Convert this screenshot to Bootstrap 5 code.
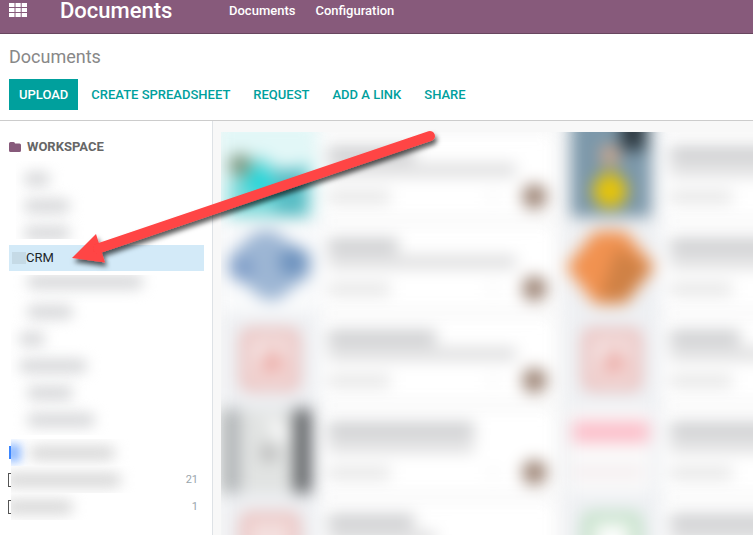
<!DOCTYPE html>
<html lang="en">
<head>
<meta charset="utf-8">
<meta name="viewport" content="width=device-width, initial-scale=1">
<title>Documents</title>
<link href="https://cdn.jsdelivr.net/npm/bootstrap@5.3.0/dist/css/bootstrap.min.css" rel="stylesheet">
<style>
body { font-family: Roboto, sans-serif; font-size: 13px; line-height: 20px; color: #212529; }
.topbar { background: #875a7b; border-bottom: 1px solid #68465f; height: 34px; padding: 0 9px; }
.topbar a { color: #fff; text-decoration: none; font-weight: 500; }
.topbar .menu-links { gap: 20px; padding-top: 1px; }
.apps-btn { background: none; border: 0; padding: 0; line-height: 0; width: 51px; text-align: left; }
.topbar .brand-link { font-size: 22px; line-height: 22px; width: 169px; }
.control-panel { padding: 11px 9px 10px; border-bottom: 1px solid #ccc; }
.crumb { font-size: 18px; line-height: 24px; color: #888; margin: 0 0 10px; font-weight: 400; }
.actions { gap: 3px; }
.btn-flat { font-size: 13px; line-height: 19px; font-weight: 500; border-radius: 0; padding: 5px 9px; text-transform: uppercase; color: #00a09d; }
.btn-flat:hover { color: #00807d; }
.btn-flat.btn-main { background: #00a09d; color: #fff; }
.side { width: 213px; border-right: 1px solid #dee2e6; padding: 16px 8px 0 9px; }
.side-title { font-size: 13px; line-height: 20px; font-weight: 700; color: #666; margin: 0; }
.side-row { height: 27px; }
.names { margin: 4px 0 0 2px; height: 160px; overflow: hidden; }
.names .side-row:first-child { height: 23px; }
.names-top { margin: 4px 0 0 7px; height: 78px; overflow: hidden; }
.picked { background: #d3eaf8; color: #212529; text-decoration: none; height: 26px; margin: 6px 0 0; padding-left: 3px; line-height: 26px; }
.picked-chip { width: 14px; height: 12px; background: #c5dae6; }
.smudge { height: 14px; border-radius: 6px; background: #d6d7d9; filter: blur(7px); flex: none; }
.w-a { width: 26px; } .w-b { width: 46px; } .w-c { width: 68px; } .w-d { width: 86px; } .w-e { width: 116px; }
.tick-edge { width: 3px; height: 14px; overflow: hidden; margin-left: -1px; flex: none; }
.tick-edge input { appearance: none; width: 14px; height: 14px; margin: 0; border: 1px solid #555; background: #fff; display: block; }
.blue-edge { width: 2px; height: 13px; background: #3b86ff; flex: none; }
.blue-haze { width: 16px; height: 18px; margin-left: -6px; background: #8fbaff; filter: blur(5px); flex: none; }
.tag-name { height: 27px; overflow: hidden; }
.tag-name .smudge { height: 14px; background: #d6d6d6; margin-left: -6px; }
.tally { color: #9aa5ac; font-size: 11px; padding-right: 6px; }
.stage { background: #f8f8f8; padding: 11px 0 0 8px; min-width: 0; }
.file-grid { display: grid; grid-template-columns: 334px 334px; gap: 8px; padding-top: 1px; filter: blur(8px); }
.file-card { height: 84px; background: #fff; border: 1px solid #f1f1f2; }
.file-thumb { width: 97px; background: #eef0f3; margin: -5px 0; padding: 4px 0 0 7px; flex: none; }
.file-thumb svg { overflow: visible; display: block; }
.file-info { padding: 13px 3px 0 9px; min-width: 0; }
.ink { height: 13px; background: #c6c7c9; flex: none; }
.ink-soft { background: #dadadb; height: 12px; }
.ink-date { width: 62px; height: 10px; background: #dedede; }
.ink-dot { width: 10px; height: 6px; background: #eee; }
.face { width: 25px; height: 25px; border-radius: 50%; background: #9c8374; }
.i1 { width: 70px; } .i2 { width: 86px; } .i3 { width: 108px; } .i4 { width: 146px; } .i5 { width: 188px; }
.pointer { position: absolute; left: 60px; top: 120px; pointer-events: none; }
</style>
<script src="https://cdn.jsdelivr.net/npm/bootstrap@5.3.0/dist/js/bootstrap.bundle.min.js"></script>
</head>
<body class="bg-white">
<div class="d-flex flex-column vh-100 overflow-hidden position-relative">
  <nav class="topbar d-flex align-items-start flex-shrink-0">
    <button class="apps-btn" type="button" aria-label="Applications">
      <svg width="18" height="17" fill="#fff" aria-hidden="true"><path d="M0 3h5.500v4H0zM6.500 3h5.200v4h-5.200zM12.700 3H18v4h-5.300zM0 8h5.500v4H0zM6.500 8h5.200v4h-5.200zM12.700 8H18v4h-5.300zM0 13h5.500v4H0zM6.500 13h5.200v4h-5.200zM12.700 13H18v4h-5.300z"/></svg>
    </button>
    <a class="brand-link" href="#">Documents</a>
    <div class="menu-links d-flex"><a href="#">Documents</a><a href="#">Configuration</a></div>
  </nav>
  <header class="control-panel flex-shrink-0">
    <h1 class="crumb">Documents</h1>
    <div class="actions d-flex flex-wrap">
      <button class="btn btn-flat btn-main" type="button">Upload</button>
      <button class="btn btn-flat" type="button">Create Spreadsheet</button>
      <button class="btn btn-flat" type="button">Request</button>
      <button class="btn btn-flat" type="button">Add a Link</button>
      <button class="btn btn-flat" type="button">Share</button>
    </div>
  </header>
  <div class="d-flex flex-grow-1 overflow-hidden">
    <aside class="side flex-shrink-0">
      <div class="d-flex align-items-center">
        <svg width="18" height="12" aria-hidden="true"><path fill="#875a7b" d="M1.500 1h3Q6 1 6 2.500h4.500Q12 2.500 12 4v5.500Q12 11 10.500 11h-9Q0 11 0 9.500v-7Q0 1 1.500 1z"/></svg>
        <h2 class="side-title">WORKSPACE</h2>
      </div>
      <div class="names-top">
        <div class="side-row d-flex align-items-center ps-2 pt-2"><div class="smudge w-a"></div></div>
        <div class="side-row d-flex align-items-center ps-2 pt-2"><div class="smudge w-b"></div></div>
        <div class="side-row d-flex align-items-center ps-2 pt-2"><div class="smudge w-b"></div></div>
      </div>
      <a class="picked d-flex align-items-center" href="#"><span class="picked-chip"></span>CRM</a>
      <div class="names">
        <div class="side-row d-flex align-items-start ps-3"><div class="smudge w-e"></div></div>
        <div class="side-row d-flex align-items-center ps-3"><div class="smudge w-b"></div></div>
        <div class="side-row d-flex align-items-center ps-2"><div class="smudge w-a"></div></div>
        <div class="side-row d-flex align-items-center ps-2"><div class="smudge w-c"></div></div>
        <div class="side-row d-flex align-items-center ps-3"><div class="smudge w-b"></div></div>
        <div class="side-row d-flex align-items-center ps-3"><div class="smudge w-c"></div></div>
      </div>
      <div class="d-flex align-items-center pt-1">
        <span class="blue-edge"></span>
        <div class="tag-name d-flex align-items-center flex-grow-1"><span class="blue-haze"></span><span class="smudge w-d ms-2"></span></div>
      </div>
      <div class="d-flex align-items-center">
        <span class="tick-edge"><input type="checkbox" aria-label="First tag"></span>
        <div class="tag-name d-flex align-items-center flex-grow-1"><span class="smudge w-e"></span></div>
        <span class="tally">21</span>
      </div>
      <div class="d-flex align-items-center">
        <span class="tick-edge"><input type="checkbox" aria-label="Second tag"></span>
        <div class="tag-name d-flex align-items-center flex-grow-1"><span class="smudge w-c"></span></div>
        <span class="tally">1</span>
      </div>
    </aside>
    <main class="stage flex-grow-1 d-flex">
      <div class="overflow-hidden flex-grow-1">
        <div class="file-grid">
          <div class="file-card d-flex">
            <div class="file-thumb"><svg width="80" height="84"><path fill="#e2f7f7" d="M-12-12h100v96h-100z"/><path fill="#7fdada" d="M0 84V48L30 22 55 40 80 30v54z"/><path fill="#20d6da" d="M14 60l14-30 26 32z"/><path fill="#58bcc4" d="M46 36h32v46H46z"/><circle cx="11" cy="32" r="11" fill="#78937a"/></svg></div>
            <div class="file-info flex-grow-1"><div class="ink i2 mb-1"></div><div class="ink ink-soft i5 mb-2"></div><div class="d-flex align-items-center"><div class="ink-date"></div><div class="ink-dot ms-auto me-4"></div><div class="face me-1"></div></div></div>
          </div>
          <div class="file-card d-flex">
            <div class="file-thumb"><svg width="80" height="84"><path fill="#7c98aa" d="M0-24h80v108H0z"/><path fill="#2b363d" d="M50-24h24v41H50z"/><circle cx="39" cy="22" r="10" fill="#d0a78c"/><path fill="#9aa16f" d="M32 34h14v20H32z"/><circle cx="39" cy="58" r="17" fill="#e6c408"/></svg></div>
            <div class="file-info flex-grow-1"><div class="ink i5 mb-1"></div><div class="ink ink-soft i5 mb-2"></div><div class="d-flex align-items-center pt-2"><div class="ink-date"></div></div></div>
          </div>
          <div class="file-card d-flex">
            <div class="file-thumb"><svg width="80" height="84"><path fill="#fafbfc" d="M-7-3h94v92H-7z"/><path fill="#9db6d4" d="M20 12Q40-4 58 16l24 12v22L62 64Q42 88 20 62L0 50V32z"/><circle cx="64" cy="37" r="14" fill="#6d92be"/><circle cx="13" cy="43" r="12" fill="#819fc9"/></svg></div>
            <div class="file-info flex-grow-1"><div class="ink i1 mb-1"></div><div class="ink ink-soft i5 mb-2"></div><div class="d-flex align-items-center"><div class="ink-date"></div><div class="ink-dot ms-auto me-4"></div><div class="face me-1"></div></div></div>
          </div>
          <div class="file-card d-flex">
            <div class="file-thumb"><svg width="80" height="84"><path fill="#f19250" d="M24 6h30l30 36-30 37H24L-5 42z"/><path fill="#cf8145" d="M46 22l34 20-23 34H28z"/></svg></div>
            <div class="file-info flex-grow-1"><div class="ink i5 mb-1"></div><div class="ink ink-soft i5 mb-2"></div><div class="d-flex align-items-center pt-2"><div class="ink-date"></div></div></div>
          </div>
          <div class="file-card d-flex">
            <div class="file-thumb"><svg width="80" height="84"><rect x="15" y="15" width="52" height="55" rx="5" fill="#f3dfde" stroke="#e8afab" stroke-width="6"/><path d="M27 57l17-28 14 25z" fill="#edada8"/></svg></div>
            <div class="file-info flex-grow-1"><div class="ink i3 mb-1"></div><div class="ink ink-soft i5 mb-2"></div><div class="d-flex align-items-center"><div class="ink-date"></div><div class="ink-dot ms-auto me-4"></div><div class="face me-1"></div></div></div>
          </div>
          <div class="file-card d-flex">
            <div class="file-thumb"><svg width="80" height="84"><rect x="15" y="15" width="52" height="55" rx="5" fill="#f3dfde" stroke="#e8afab" stroke-width="6"/><path d="M27 57l17-28 14 25z" fill="#edada8"/></svg></div>
            <div class="file-info flex-grow-1"><div class="ink i1 mb-1"></div><div class="ink ink-soft i5 mb-2"></div><div class="d-flex align-items-center pt-2"><div class="ink-date"></div></div></div>
          </div>
          <div class="file-card d-flex">
            <div class="file-thumb"><svg width="80" height="84"><path fill="#e1e3e2" d="M-17 0h97v84h-97z"/><path fill="#a9adb0" d="M-4 0h14v84H-4z"/><path fill="#5c5f62" d="M65 0h17v84H65z"/><circle cx="40" cy="44" r="8" fill="#b0b0b0"/><path d="M36 4l26 20-12 12z" fill="#fff"/></svg></div>
            <div class="file-info flex-grow-1"><div class="ink i4 mb-1"></div><div class="ink ink-soft i4 mb-2"></div><div class="d-flex align-items-center"><div class="ink-date"></div><div class="ink-dot ms-auto me-4"></div><div class="face me-1"></div></div></div>
          </div>
          <div class="file-card d-flex">
            <div class="file-thumb"><svg width="80" height="84"><path fill="#fafafa" d="M0 0h80v84H0z"/><path fill="#fcbfca" d="M2 12h76v22H2z"/><path fill="#f0e2e5" d="M2 60h70v6H2z"/></svg></div>
            <div class="file-info flex-grow-1"><div class="ink i3 mb-1"></div><div class="ink ink-soft i5 mb-2"></div><div class="d-flex align-items-center pt-2"><div class="ink-date"></div></div></div>
          </div>
          <div class="file-card d-flex">
            <div class="file-thumb"><svg width="80" height="84"><rect x="15" y="15" width="52" height="55" rx="5" fill="#f3dfde" stroke="#e8afab" stroke-width="6"/></svg></div>
            <div class="file-info flex-grow-1"><div class="ink i2 mb-1"></div><div class="ink ink-soft i3"></div></div>
          </div>
          <div class="file-card d-flex">
            <div class="file-thumb"><svg width="80" height="84"><rect x="15" y="15" width="52" height="55" rx="5" fill="#e7f1e8" stroke="#abd8b2" stroke-width="6"/><path fill="#fff" d="M30 26h22v30H30z"/></svg></div>
            <div class="file-info flex-grow-1"><div class="ink i5 mb-1"></div><div class="ink ink-soft i3"></div></div>
          </div>
        </div>
      </div>
    </main>
  </div>
  <svg class="pointer" width="390" height="160" aria-hidden="true">
    <defs><filter id="drop" x="-5%" y="-10%" width="110%" height="125%"><feDropShadow dx="2" dy="4" stdDeviation="2.500" flood-color="#000" flood-opacity=".65"/></filter></defs>
    <g filter="url(#drop)" fill="#ff4444"><path d="M12 138L36 114 45 142.500z"/><path d="M38 128.500L370 16" stroke="#ff4444" stroke-width="10" stroke-linecap="round"/></g>
  </svg>
</div>
</body>
</html>
